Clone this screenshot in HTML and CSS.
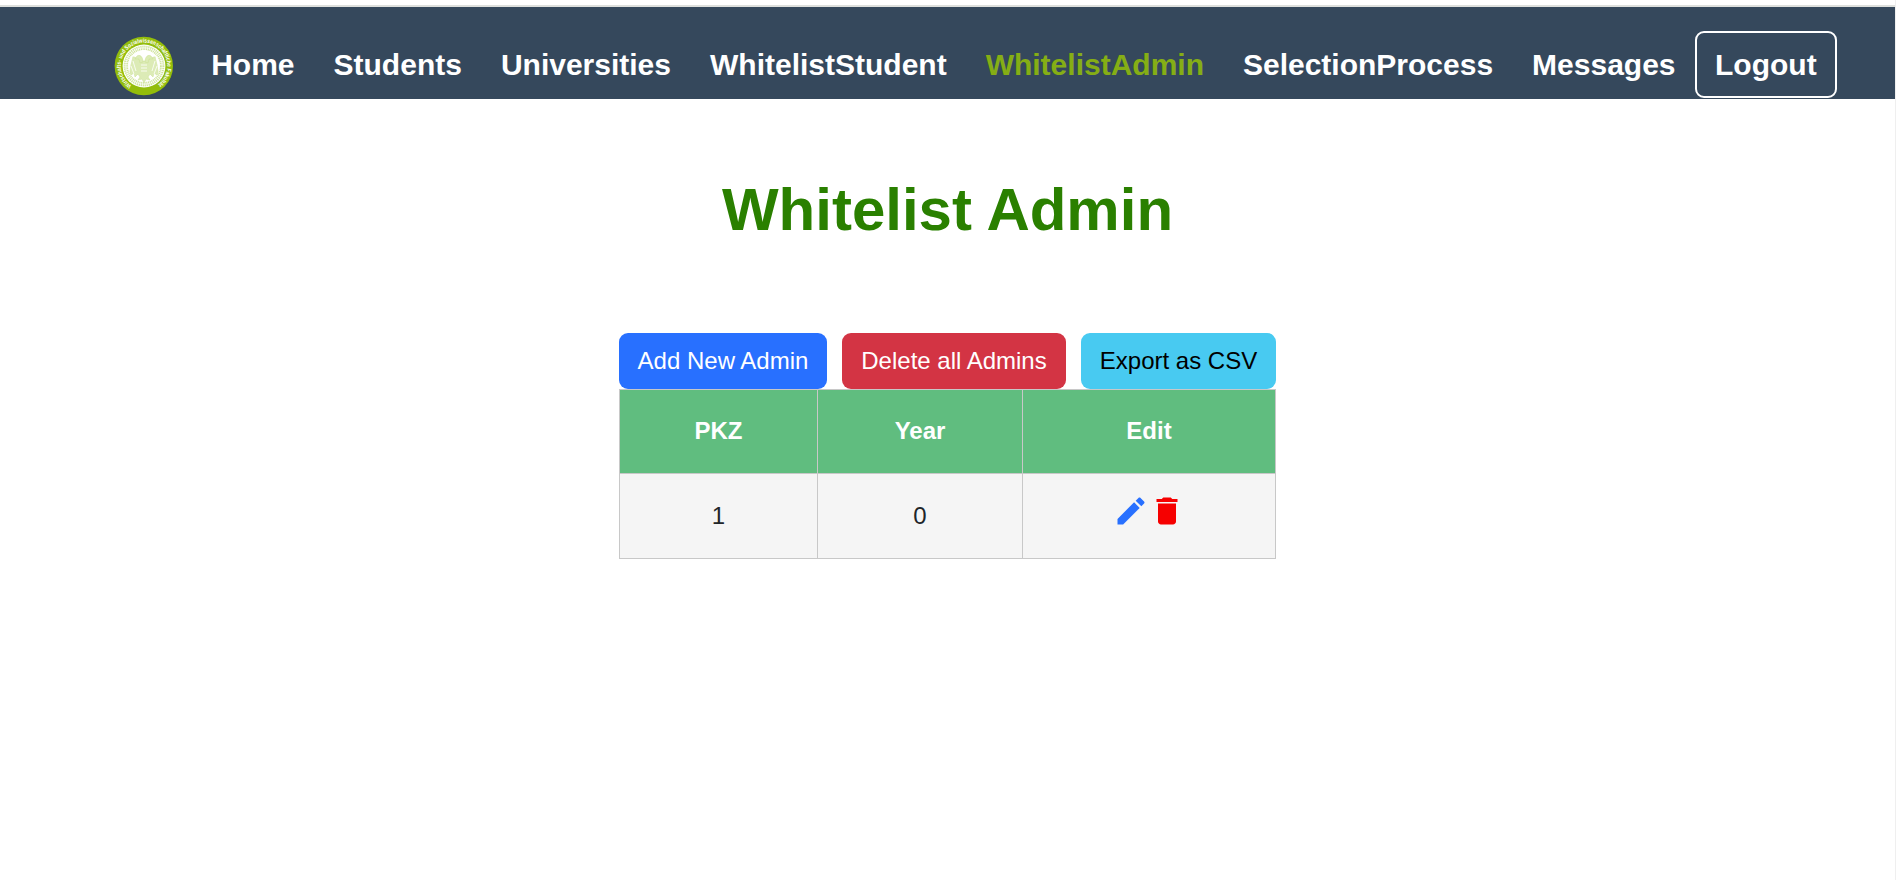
FILE: index.html
```html
<!DOCTYPE html>
<html lang="en">
<head>
<meta charset="utf-8">
<title>Whitelist Admin</title>
<link rel="stylesheet" href="styles.css">
</head>
<body>
<header class="navbar">
  <svg class="logo" viewBox="0 0 60 60">
    <defs>
      <path id="ring" d="M17.5 49.3A23.2 23.2 0 1 1 42.5 49.3"/>
    </defs>
    <circle cx="29.8" cy="30" r="29.2" fill="#93bd0b"/>
    <circle cx="30" cy="30" r="21.4" fill="#fff"/>
    <circle cx="30" cy="30" r="18.2" fill="none" stroke="#cfe39b" stroke-width="4.4" stroke-dasharray="1.2 .7"/>
    <circle cx="30" cy="30" r="18.2" fill="none" stroke="#fff" stroke-width=".6"/>
    <g fill="#dcebb6" stroke="#cbe093" stroke-width=".5">
      <path d="M28 25C24 23 20 20 18 21C14 27 15 34 17 39L20 37L21 41L24 38L26 41L24 44L28 43L30 47L32 43L36 44L34 41L36 38L39 41L40 37L43 39C45 34 46 27 42 21C40 20 36 23 32 25Z"/>
      <path d="M29 26C29 21 26 18 23 20L21 23L25 23L26 27ZM31 26C31 21 34 18 37 20L39 23L35 23L34 27Z"/>
    </g>
    <path d="M19 25L22 35M17 30L20 38M41 25L38 35M43 30L40 38M27 29H33M27 32H33M27 35H33" fill="none" stroke="#fff" stroke-width=".8"/>
    <path d="M25 15H35L30 20ZM17 20L19 19L16.500 29L15.500 36C14 31 14 25 17 20ZM43 20L41 19L43.500 29L44.500 36C46 31 46 25 43 20Z" fill="#fff"/>
    <text class="logo-text"><textPath href="#ring" textLength="117" lengthAdjust="spacingAndGlyphs">Wirtschafts- und Sozialwissenschaftliche Fakultät</textPath></text>
  </svg>
  <nav class="nav-links">
    <a>Home</a>
    <a>Students</a>
    <a>Universities</a>
    <a>WhitelistStudent</a>
    <a class="active">WhitelistAdmin</a>
    <a>SelectionProcess</a>
    <a>Messages</a>
  </nav>
  <button class="logout">Logout</button>
</header>
<main>
  <h1>Whitelist Admin</h1>
  <section class="panel">
    <div class="actions">
      <button class="btn btn-add">Add New Admin</button>
      <button class="btn btn-delete">Delete all Admins</button>
      <button class="btn btn-export">Export as CSV</button>
    </div>
    <table>
      <colgroup><col class="col-pkz"><col class="col-year"><col class="col-edit"></colgroup>
      <thead><tr><th>PKZ</th><th>Year</th><th>Edit</th></tr></thead>
      <tbody><tr><td>1</td><td>0</td><td>
        <div class="icons">
          <svg viewBox="0 0 24 24" fill="#2870ff"><path d="M3 17.25V21h3.75L17.81 9.94l-3.75-3.75L3 17.25zM20.71 7.04c.39-.39.39-1.02 0-1.41l-2.34-2.34c-.39-.39-1.02-.39-1.41 0l-1.83 1.83 3.75 3.75 1.83-1.83z"/></svg>
          <svg viewBox="0 0 24 24" fill="#f60000"><path d="M6 19c0 1.1.9 2 2 2h8c1.1 0 2-.9 2-2V7H6v12zM19 4h-3.5l-1-1h-5l-1 1H5v2h14V4z"/></svg>
        </div>
      </td></tr></tbody>
    </table>
  </section>
</main>
</body>
</html>
```
FILE: styles.css
```css
* { box-sizing: border-box; }
body {
  margin: 0;
  height: 880px;
  padding-top: 5px;
  border-right: 1px solid #efefef;
  background: #fff;
  color: #212529;
  font-family: "Liberation Sans", Arial, sans-serif;
  font-size: 24px;
}
.navbar {
  display: flex;
  height: 94px;
  padding: 24px 0 0 114px;
  border-top: 2px solid #dee0dd;
  background: #35485c;
  color: #fff;
  font-size: 30px;
  font-weight: 700;
}
.logo { width: 60px; height: 60px; margin-top: 5px; flex: none; }
.logo-text { fill: #fff; font-size: 6px; font-weight: 700; }
.nav-links { display: flex; gap: 39px; margin-left: 37.2px; line-height: 67px; }
.active { color: #85ae15; }
.logout {
  width: 142px;
  height: 67px;
  margin-left: 19.3px;
  padding: 0;
  border: 2px solid #fff;
  border-radius: 9px;
  background: none;
  color: #fff;
  font: inherit;
}
h1 {
  margin: 75px 0 0;
  color: #2a8000;
  font-size: 60px;
  line-height: 72px;
  text-align: center;
}
.panel { width: 657px; margin: 87px auto 0; }
.actions { display: flex; justify-content: space-between; }
.btn {
  height: 56px;
  padding: 0;
  border: 0;
  border-radius: 9px;
  color: #fff;
  font: inherit;
}
.btn-add { width: 208px; background: #2870ff; }
.btn-delete { width: 224px; background: #d33444; }
.btn-export { width: 195px; background: #48caf1; color: #000; }
table { width: 657px; border-collapse: collapse; table-layout: fixed; }
.col-pkz { width: 198px; }
.col-year { width: 205px; }
th, td { height: 85px; padding: 0; border: 1px solid #c8c8c8; text-align: center; }
th { height: 84px; padding-bottom: 2px; background: #60bd7f; color: #fff; }
td { background: #f5f5f5; }
.icons { display: flex; justify-content: center; padding-bottom: 11px; }
.icons svg { width: 36px; height: 36px; }
```
